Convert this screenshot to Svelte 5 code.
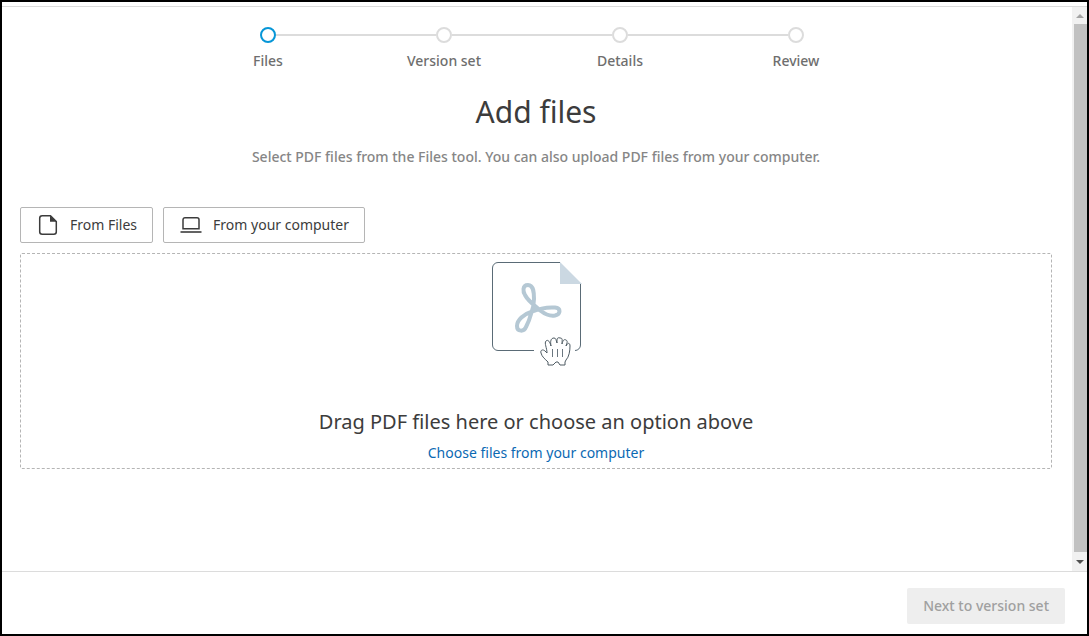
<script lang="ts">
  const steps = ['Files', 'Version set', 'Details', 'Review'];
  let current = $state(0);
  let picker: HTMLInputElement;

  function openPicker() {
    picker.click();
  }
</script>

<div class="dialog">
  <div class="body">
    <main class="content">
      <ol class="stepper">
        {#each steps as step, i}
          <li class="step" class:active={i === current} aria-current={i === current ? 'step' : undefined}>
            <span class="dot"></span>
            <span class="step-label">{step}</span>
          </li>
        {/each}
      </ol>

      <h1>Add files</h1>
      <p class="intro">Select PDF files from the Files tool. You can also upload PDF files from your computer.</p>

      <div class="sources">
        <button type="button" class="source">
          <svg width="24" height="24" viewBox="0 0 24 24" aria-hidden="true">
            <path d="M14.5 2.8H6.2A2.5 2.5 0 0 0 3.7 5.3V18.7A2.5 2.5 0 0 0 6.2 21.2H17.8A2.5 2.5 0 0 0 20.3 18.7V8.5Z" fill="none" stroke="#3c3c3c" stroke-width="1.5" stroke-linejoin="round" />
            <path d="M14 2.5V8.7H20.8Z" fill="#3c3c3c" />
          </svg>
          <span>From Files</span>
        </button>
        <button type="button" class="source" onclick={openPicker}>
          <svg width="24" height="24" viewBox="0 0 24 24" aria-hidden="true">
            <path d="M4 15.7V6.7A2 2 0 0 1 6 4.7H18A2 2 0 0 1 20 6.7V15.7Z" fill="none" stroke="#3c3c3c" stroke-width="1.5" />
            <path d="M1.5 19H22.5" stroke="#3c3c3c" stroke-width="1.6" />
          </svg>
          <span>From your computer</span>
        </button>
      </div>

      <section class="dropzone">
        <svg class="art" width="96" height="110" viewBox="0 0 96 110" aria-hidden="true">
          <path d="M72 1.5H10A5.5 5.5 0 0 0 4.5 7V84A5.5 5.5 0 0 0 10 89.5H46M92.5 22V84A5.5 5.5 0 0 1 87 89.5" fill="none" stroke="#5a6b76" />
          <path d="M72 1V23H94Z" fill="#cbd8e2" />
          <path d="M43 53C45 48 46 43 46 38C46 33 46 24 40 24C34 24 35 31 37 34C40 40 47 45 53 50C58 54 64 55 67 54.500C73 53 73 47 67 46.500C60 46 50 48 43 51C36 53 29 59 29 65C29 71 36 71 38 66C40 62 42 57 43 53Z" fill="none" stroke="#b5c8d4" stroke-width="4" stroke-linejoin="round" />
          <path d="M60 104V101C57 98 54 96 53 92C52 89 55 88 57 90L59 92C59 87 56 82 58 80C60 78 62 81 63 85C62 80 63 77 66 77C68 77 68 79 69 82C69 78 69 76 72 77C75 77 74 79 74 83C75 79 76 78 78 79C80 80 79 82 78 85C80 81 82 82 82 85C82 90 81 96 78 99L77 101V104H72L70 101H68L65 104Z" fill="#fff" stroke="#4e5b63" />
          <path d="M64.5 88V96M69.5 88V96M74.5 88V96" stroke="#6b7780" />
        </svg>
        <h2>Drag PDF files here or choose an option above</h2>
        <label class="choose">
          Choose files from your computer
          <input bind:this={picker} type="file" accept="application/pdf" multiple />
        </label>
      </section>
    </main>

    <div class="scrollbar" aria-hidden="true">
      <span class="arrow up"></span>
      <span class="thumb"></span>
      <span class="arrow down"></span>
    </div>
  </div>

  <footer>
    <button type="button" class="next" disabled>Next to version set</button>
  </footer>
</div>

<style>
  :global(body) {
    margin: 0;
    background: #fff;
  }

  .dialog {
    box-sizing: border-box;
    min-height: 100vh;
    display: flex;
    flex-direction: column;
    padding-top: 4px;
    border: 2px solid #000;
    color: #3c3c3c;
    font-family: 'Noto Sans', sans-serif;
    font-size: 14px;
    line-height: 20px;
  }

  .body {
    flex: 1;
    display: flex;
    border-top: 1px solid #dcdcdc;
    border-bottom: 1px solid #dcdcdc;
  }

  .content {
    flex: 1;
    padding: 20px 20px 0 18px;
  }

  /* Stepper */
  .stepper {
    display: grid;
    grid-template-columns: repeat(4, 176px);
    justify-content: center;
    margin: 0;
    padding: 0 8px 0 0;
    list-style: none;
  }

  .step {
    position: relative;
    display: flex;
    flex-direction: column;
    align-items: center;
    gap: 8px;
    color: #6e6e6e;
  }

  .step:not(:last-child)::after {
    content: '';
    position: absolute;
    top: 7px;
    left: calc(50% + 8px);
    width: calc(100% - 16px);
    height: 2px;
    background: #dcdcdc;
  }

  .dot {
    box-sizing: border-box;
    width: 16px;
    height: 16px;
    border: 2px solid #dcdcdc;
    border-radius: 50%;
  }

  .active .dot {
    border-color: #0696d7;
  }

  .step-label {
    font-weight: 500;
  }

  h1,
  h2 {
    margin: 0;
    font-weight: 400;
    text-align: center;
  }

  h1 {
    margin-top: 21px;
    font-size: 30px;
    line-height: 40px;
  }

  .intro {
    margin: 15px 0 40px;
    color: #868686;
    font-weight: 500;
    text-align: center;
  }

  .sources {
    display: flex;
    gap: 10px;
    margin-bottom: 10px;
  }

  .source {
    display: flex;
    align-items: center;
    gap: 10px;
    height: 36px;
    padding: 0 15px;
    border: 1px solid #b5b5b5;
    border-radius: 2px;
    background: #fff;
    color: inherit;
    font: inherit;
    cursor: pointer;
  }

  /* Drop area */
  .dropzone {
    display: flex;
    flex-direction: column;
    align-items: center;
    padding: 7px 0 5px;
    border: 1px dashed #b5b5b5;
    border-radius: 2px;
  }

  h2 {
    margin: 36px 0 6px;
    font-size: 20px;
    line-height: 30px;
  }

  .choose {
    color: #0b69b3;
    cursor: pointer;
  }

  .choose input {
    display: none;
  }

  /* Scrollbar */
  .scrollbar {
    display: flex;
    flex-direction: column;
    align-items: center;
    width: 15px;
    background: #f1f1f1;
  }

  .thumb {
    flex: 1;
    align-self: flex-end;
    width: 13px;
    background: #c1c1c1;
  }

  .arrow {
    border: 4px solid transparent;
  }

  .up {
    margin: 3px 0 6px;
    border-bottom-color: #a3a3a3;
  }

  .down {
    margin: 8px 0 3px;
    border-top-color: #505050;
  }

  footer {
    display: flex;
    justify-content: flex-end;
    padding: 16px 22px 10px;
  }

  .next {
    height: 36px;
    padding: 0 16px;
    border: 0;
    border-radius: 2px;
    background: #eee;
    color: #a0a0a0;
    font: inherit;
    font-weight: 500;
  }
</style>
